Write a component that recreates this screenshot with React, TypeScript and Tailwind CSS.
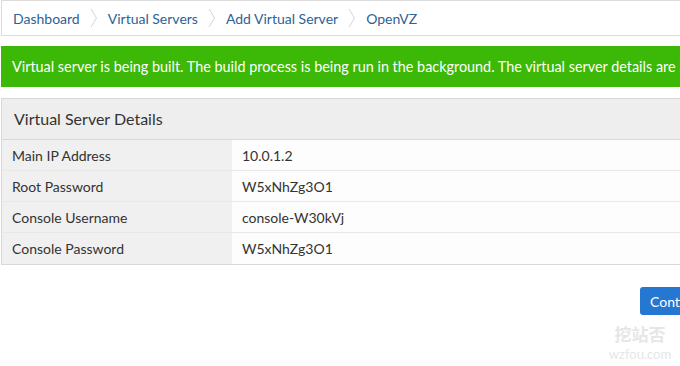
import React from "react";

const Chevron = () => (
  <svg width="8" height="22" viewBox="0 0 8 22" className="mx-[10px] shrink-0">
    <path d="M1 2 L6.5 11 L1 20" fill="none" stroke="#d4d4d4" strokeWidth="1" />
  </svg>
);

const rows: [string, string][] = [
  ["Main IP Address", "10.0.1.2"],
  ["Root Password", "W5xNhZg3O1"],
  ["Console Username", "console-W30kVj"],
  ["Console Password", "W5xNhZg3O1"],
];

export default function App() {
  return (
    <div
      className="relative w-[680px] h-[366px] overflow-hidden bg-white"
      style={{ fontFamily: "Lato, 'Noto Sans', sans-serif" }}
    >
      <div className="w-[1000px] pl-[1px]">
        <div className="flex items-center h-[36px] border border-[#dcdcdc] pl-[11px] text-[14px] text-[#2f5f96]">
          <span>Dashboard</span>
          <Chevron />
          <span>Virtual Servers</span>
          <Chevron />
          <span>Add Virtual Server</span>
          <Chevron />
          <span>OpenVZ</span>
        </div>
        <div className="mt-[10px] h-[41px] flex items-center bg-[#3cb806] text-white text-[14.4px] pl-[11px] whitespace-nowrap">
          Virtual server is being built. The build process is being run in the background. The virtual server details are listed below.
        </div>
        <div className="mt-[11px] border border-[#d8d8d8] text-[14px] text-[#333]">
          <div className="h-[41px] flex items-center bg-[#eeeeee] border-b border-[#d8d8d8] pl-[12px] text-[16px]">
            Virtual Server Details
          </div>
          {rows.map(([k, v], i) => (
            <div
              key={k}
              className={`flex h-[31px] ${i < rows.length - 1 ? "border-b border-[#e8e8e8]" : ""}`}
            >
              <div className="w-[230px] bg-[#f0f0f0] flex items-center pl-[10px]">{k}</div>
              <div className="flex-1 bg-[#fdfdfd] flex items-center pl-[10px]">{v}</div>
            </div>
          ))}
        </div>
        <div className="flex pl-[639px] mt-[22px]">
          <button className="h-[28px] px-[10px] rounded-[3px] bg-[#2677d1] text-white text-[14px]">
            Continue
          </button>
        </div>
      </div>
      <div className="absolute left-[610px] top-[324px] w-[60px] flex flex-col items-center text-[#e6e6e6]">
        <span className="text-[17px] leading-[20px] font-bold" style={{ fontFamily: "'Noto Sans CJK SC', sans-serif" }}>挖站否</span>
        <span className="text-[13px] leading-[14px] mt-[3px]">wzfou.com</span>
      </div>
    </div>
  );
}
